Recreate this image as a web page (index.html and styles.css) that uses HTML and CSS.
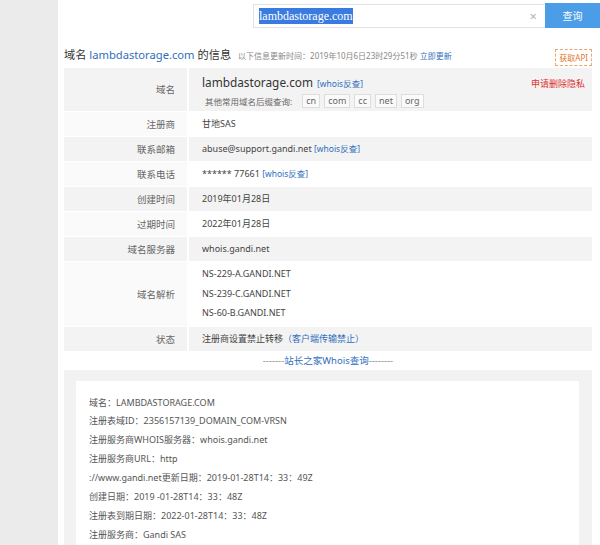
FILE: index.html
```html
<!DOCTYPE html>
<html lang="zh-CN">
<head>
<meta charset="utf-8">
<title>lambdastorage.com 的信息</title>
<link rel="stylesheet" href="styles.css">
</head>
<body>
<div class="page">
  <aside class="sidebar"></aside>
  <main class="main">
    <div class="search">
      <div class="search-box">
        <span class="search-text"><span class="sel">lambdastorage.com</span></span>
        <span class="clear">×</span>
      </div>
      <button class="search-btn">查询</button>
    </div>

    <div class="title-row">
      <h1 class="title">域名 <a class="blue">lambdastorage.com</a> 的信息</h1>
      <span class="update">以下信息更新时间：2019年10月6日23时29分51秒 <a class="blue">立即更新</a></span>
      <span class="api">获取API</span>
    </div>

    <table class="info">
      <tr class="g">
        <th>域名</th>
        <td class="domain-cell">
          <div class="domain-line"><span class="big">lambdastorage.com</span> <a class="blue small">[whois反查]</a><span class="privacy">申请删除隐私</span></div>
          <div class="suffix">其他常用域名后缀查询: <span class="chip">cn</span><span class="chip">com</span><span class="chip">cc</span><span class="chip">net</span><span class="chip">org</span></div>
        </td>
      </tr>
      <tr class="w"><th>注册商</th><td>甘地SAS</td></tr>
      <tr class="g"><th>联系邮箱</th><td>abuse@support.gandi.net <a class="blue small">[whois反查]</a></td></tr>
      <tr class="w"><th>联系电话</th><td>****** 77661 <a class="blue small">[whois反查]</a></td></tr>
      <tr class="g"><th>创建时间</th><td>2019年01月28日</td></tr>
      <tr class="w"><th>过期时间</th><td>2022年01月28日</td></tr>
      <tr class="g"><th>域名服务器</th><td>whois.gandi.net</td></tr>
      <tr class="w ns"><th>域名解析</th><td><div>NS-229-A.GANDI.NET</div><div>NS-239-C.GANDI.NET</div><div>NS-60-B.GANDI.NET</div></td></tr>
      <tr class="g"><th>状态</th><td>注册商设置禁止转移<a class="blue">（客户端传输禁止）</a></td></tr>
      <tr class="w link-row"><td colspan="2"><span class="dash">-------</span><a class="blue">站长之家Whois查询</a><span class="dash">--------</span></td></tr>
    </table>

    <div class="raw-wrap">
      <div class="raw">
        <p>域名：LAMBDASTORAGE.COM</p>
        <p>注册表域ID：2356157139_DOMAIN_COM-VRSN</p>
        <p>注册服务商WHOIS服务器：whois.gandi.net</p>
        <p>注册服务商URL：http</p>
        <p>://www.gandi.net更新日期：2019-01-28T14：33：49Z</p>
        <p>创建日期：2019 -01-28T14：33：48Z</p>
        <p>注册表到期日期：2022-01-28T14：33：48Z</p>
        <p>注册服务商：Gandi SAS</p>
      </div>
    </div>
  </main>
</div>
</body>
</html>
```

FILE: styles.css
```css
* { box-sizing: border-box; }
html, body { margin: 0; padding: 0; }
body {
  font-family: "Noto Sans", "Noto Sans CJK SC", sans-serif;
  color: #333;
  background: #fff;
  width: 600px;
  height: 545px;
  overflow: hidden;
}
a { text-decoration: none; }
.blue { color: #2f6fbd; }
.page { display: flex; height: 545px; }
.sidebar { width: 58px; flex: none; background: #ebebeb; }
.main { flex: 1; padding-left: 6px; min-width: 0; }

.search { display: flex; justify-content: flex-end; padding-top: 4px; height: 46px; }
.search-box {
  width: 292px; height: 24px;
  border: 1px solid #e3e3e3; border-right: none;
  display: flex; align-items: center; justify-content: space-between;
  padding: 0 8px 0 5px;
}
.search-text { font-family: "Liberation Serif", serif; font-size: 12px; }
.sel { background: #3a7be0; color: #fff; padding: 1px 0; }
.clear { color: #b5b5b5; font-size: 13px; }
.search-btn {
  width: 55px; height: 25px; margin-top: -1px;
  background: #4a9de6; color: #fff; border: none;
  font-family: "Noto Sans CJK SC", sans-serif; font-size: 10px;
}

.title-row { display: flex; align-items: baseline; width: 528px; height: 22px; }
.title { margin: 0; font-size: 11.2px; font-weight: normal; color: #333; }
.update { font-size: 8px; color: #888; margin-left: 7px; }
.api {
  margin-left: auto; font-size: 8px; color: #e07a2c;
  border: 1px dashed #e9a66e; padding: 2px 3px; align-self: center;
}

.info { width: 528px; border-collapse: collapse; font-size: 9px; }
.info th {
  width: 124px; text-align: right; font-weight: normal;
  color: #666; font-size: 9.5px; padding: 0 12px 0 0;
  border-right: 2px solid #fff; vertical-align: middle;
}
.info td { padding: 0 0 0 13px; color: #444; height: 25px; }
.info tr { border-bottom: 1px solid #fff; }
.info tr.g th, .info tr.g td { background: #f3f3f3; }
.info tr.w th { background: #fafafa; }
.info tr.w td { background: #fff; }
.info td.domain-cell { height: 43px; padding-top: 3px; }
.domain-line { display: flex; align-items: baseline; gap: 4px; }
.big { font-size: 11.8px; color: #333; }
.small { font-size: 8.5px; }
.privacy { margin-left: auto; margin-right: 7px; color: #e03131; font-size: 9px; }
.suffix { font-size: 8.5px; color: #666; margin-top: 4px; display: flex; align-items: center; padding-left: 3px; }
.chip {
  font-size: 9px; border: 1px solid #ddd; background: #fafafa;
  padding: 0 3px; margin-left: 4px; line-height: 12px; color: #666;
}
.suffix .chip:first-child { margin-left: 10px; }
.ns td { height: 65px; }
.ns td div { line-height: 19.5px; }
.link-row td { text-align: center; padding: 0; height: 18px; font-size: 9.5px; }
.dash { color: #888; }

.raw-wrap { width: 528px; background: #f2f2f2; padding: 11px 13px 0 12px; height: 200px; }
.raw { background: #fff; padding: 13px 12px 0 13px; height: 190px; }
.raw p { margin: 0; font-size: 9px; line-height: 18.9px; color: #555; }
```
